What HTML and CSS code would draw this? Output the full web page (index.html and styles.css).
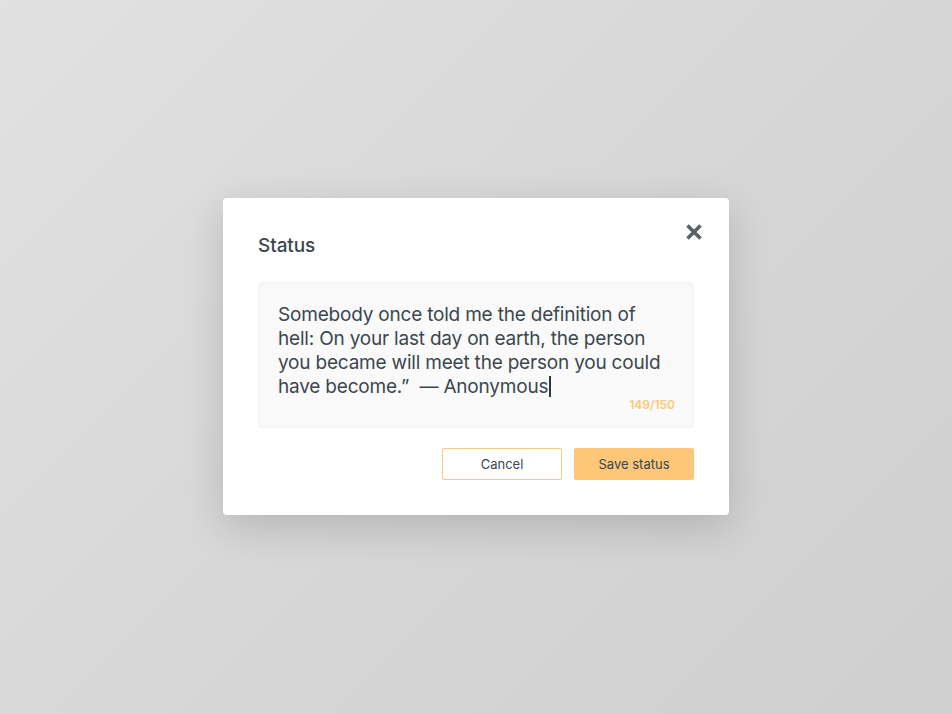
FILE: index.html
```html
<!DOCTYPE html>
<html>
<head>
<meta charset="utf-8">
<link rel="stylesheet" href="styles.css">
</head>
<body>
<div class="modal">
  <div class="modal-head">
    <h2 class="title">Status</h2>
    <button class="close" aria-label="Close">
      <svg width="18" height="18" viewBox="0 0 18 18"><path d="M2.5 2.5 L15.5 15.5 M15.5 2.5 L2.5 15.5" stroke="#56646a" stroke-width="3.6" stroke-linecap="butt"/></svg>
    </button>
  </div>
  <div class="field">
    <p class="quote">Somebody once told me the definition of hell: On your last day on earth, the person you became will meet the person you could have become.”&nbsp; — Anonymous<span class="caret"></span></p>
    <div class="counter">149/150</div>
  </div>
  <div class="actions">
    <button class="btn btn-outline">Cancel</button>
    <button class="btn btn-fill">Save status</button>
  </div>
</div>
</body>
</html>
```
FILE: styles.css
```css
html, body {
  margin: 0;
  height: 100%;
}
body {
  width: 952px;
  height: 714px;
  background: linear-gradient(135deg, #e1e1e1 0%, #d6d6d6 55%, #cfcfcf 100%);
  display: flex;
  align-items: center;
  justify-content: center;
  font-family: Inter, "Noto Sans", sans-serif;
  color: #3a474e;
}
.modal {
  width: 506px;
  box-sizing: border-box;
  background: #fff;
  border-radius: 4px;
  padding: 36px 35px 35px;
  margin-top: -1px;
  box-shadow: 0 12px 40px rgba(0, 0, 0, 0.16);
}
.modal-head {
  display: flex;
  justify-content: space-between;
  align-items: flex-start;
  margin-bottom: 24px;
}
.title {
  margin: 0;
  font-size: 19px;
  line-height: 24px;
  font-weight: 500;
  color: #3a474e;
  letter-spacing: -0.1px;
}
.close {
  border: 0;
  background: none;
  padding: 0;
  margin: -11px -9px 0 0;
  width: 18px;
  height: 18px;
  display: block;
}
.close svg { display: block; }
.field {
  background: #fafafa;
  border-radius: 4px;
  box-shadow: inset 0 0 6px rgba(0, 0, 0, 0.04), 0 0 3px rgba(0, 0, 0, 0.03);
  padding: 21px 19px 16px 20px;
}
.quote {
  margin: 0;
  font-size: 19px;
  line-height: 24px;
  color: #3a474e;
  letter-spacing: -0.2px;
}
.caret {
  display: inline-block;
  width: 2px;
  height: 21px;
  background: #2e3a40;
  vertical-align: -4px;
  margin-left: 1px;
}
.counter {
  text-align: right;
  font-size: 12px;
  line-height: 14px;
  margin-top: -1px;
  font-weight: 600;
  color: #fcc878;
}
.actions {
  display: flex;
  justify-content: flex-end;
  gap: 12px;
  margin-top: 20px;
}
.btn {
  width: 120px;
  height: 32px;
  box-sizing: border-box;
  border-radius: 2px;
  font-family: Inter, "Noto Sans", sans-serif;
  font-size: 13px;
  color: #3a474e;
  cursor: pointer;
}
.btn-outline {
  background: #fff;
  border: 1px solid #fdc880;
}
.btn-fill {
  background: #fdc679;
  border: 0;
}
```
